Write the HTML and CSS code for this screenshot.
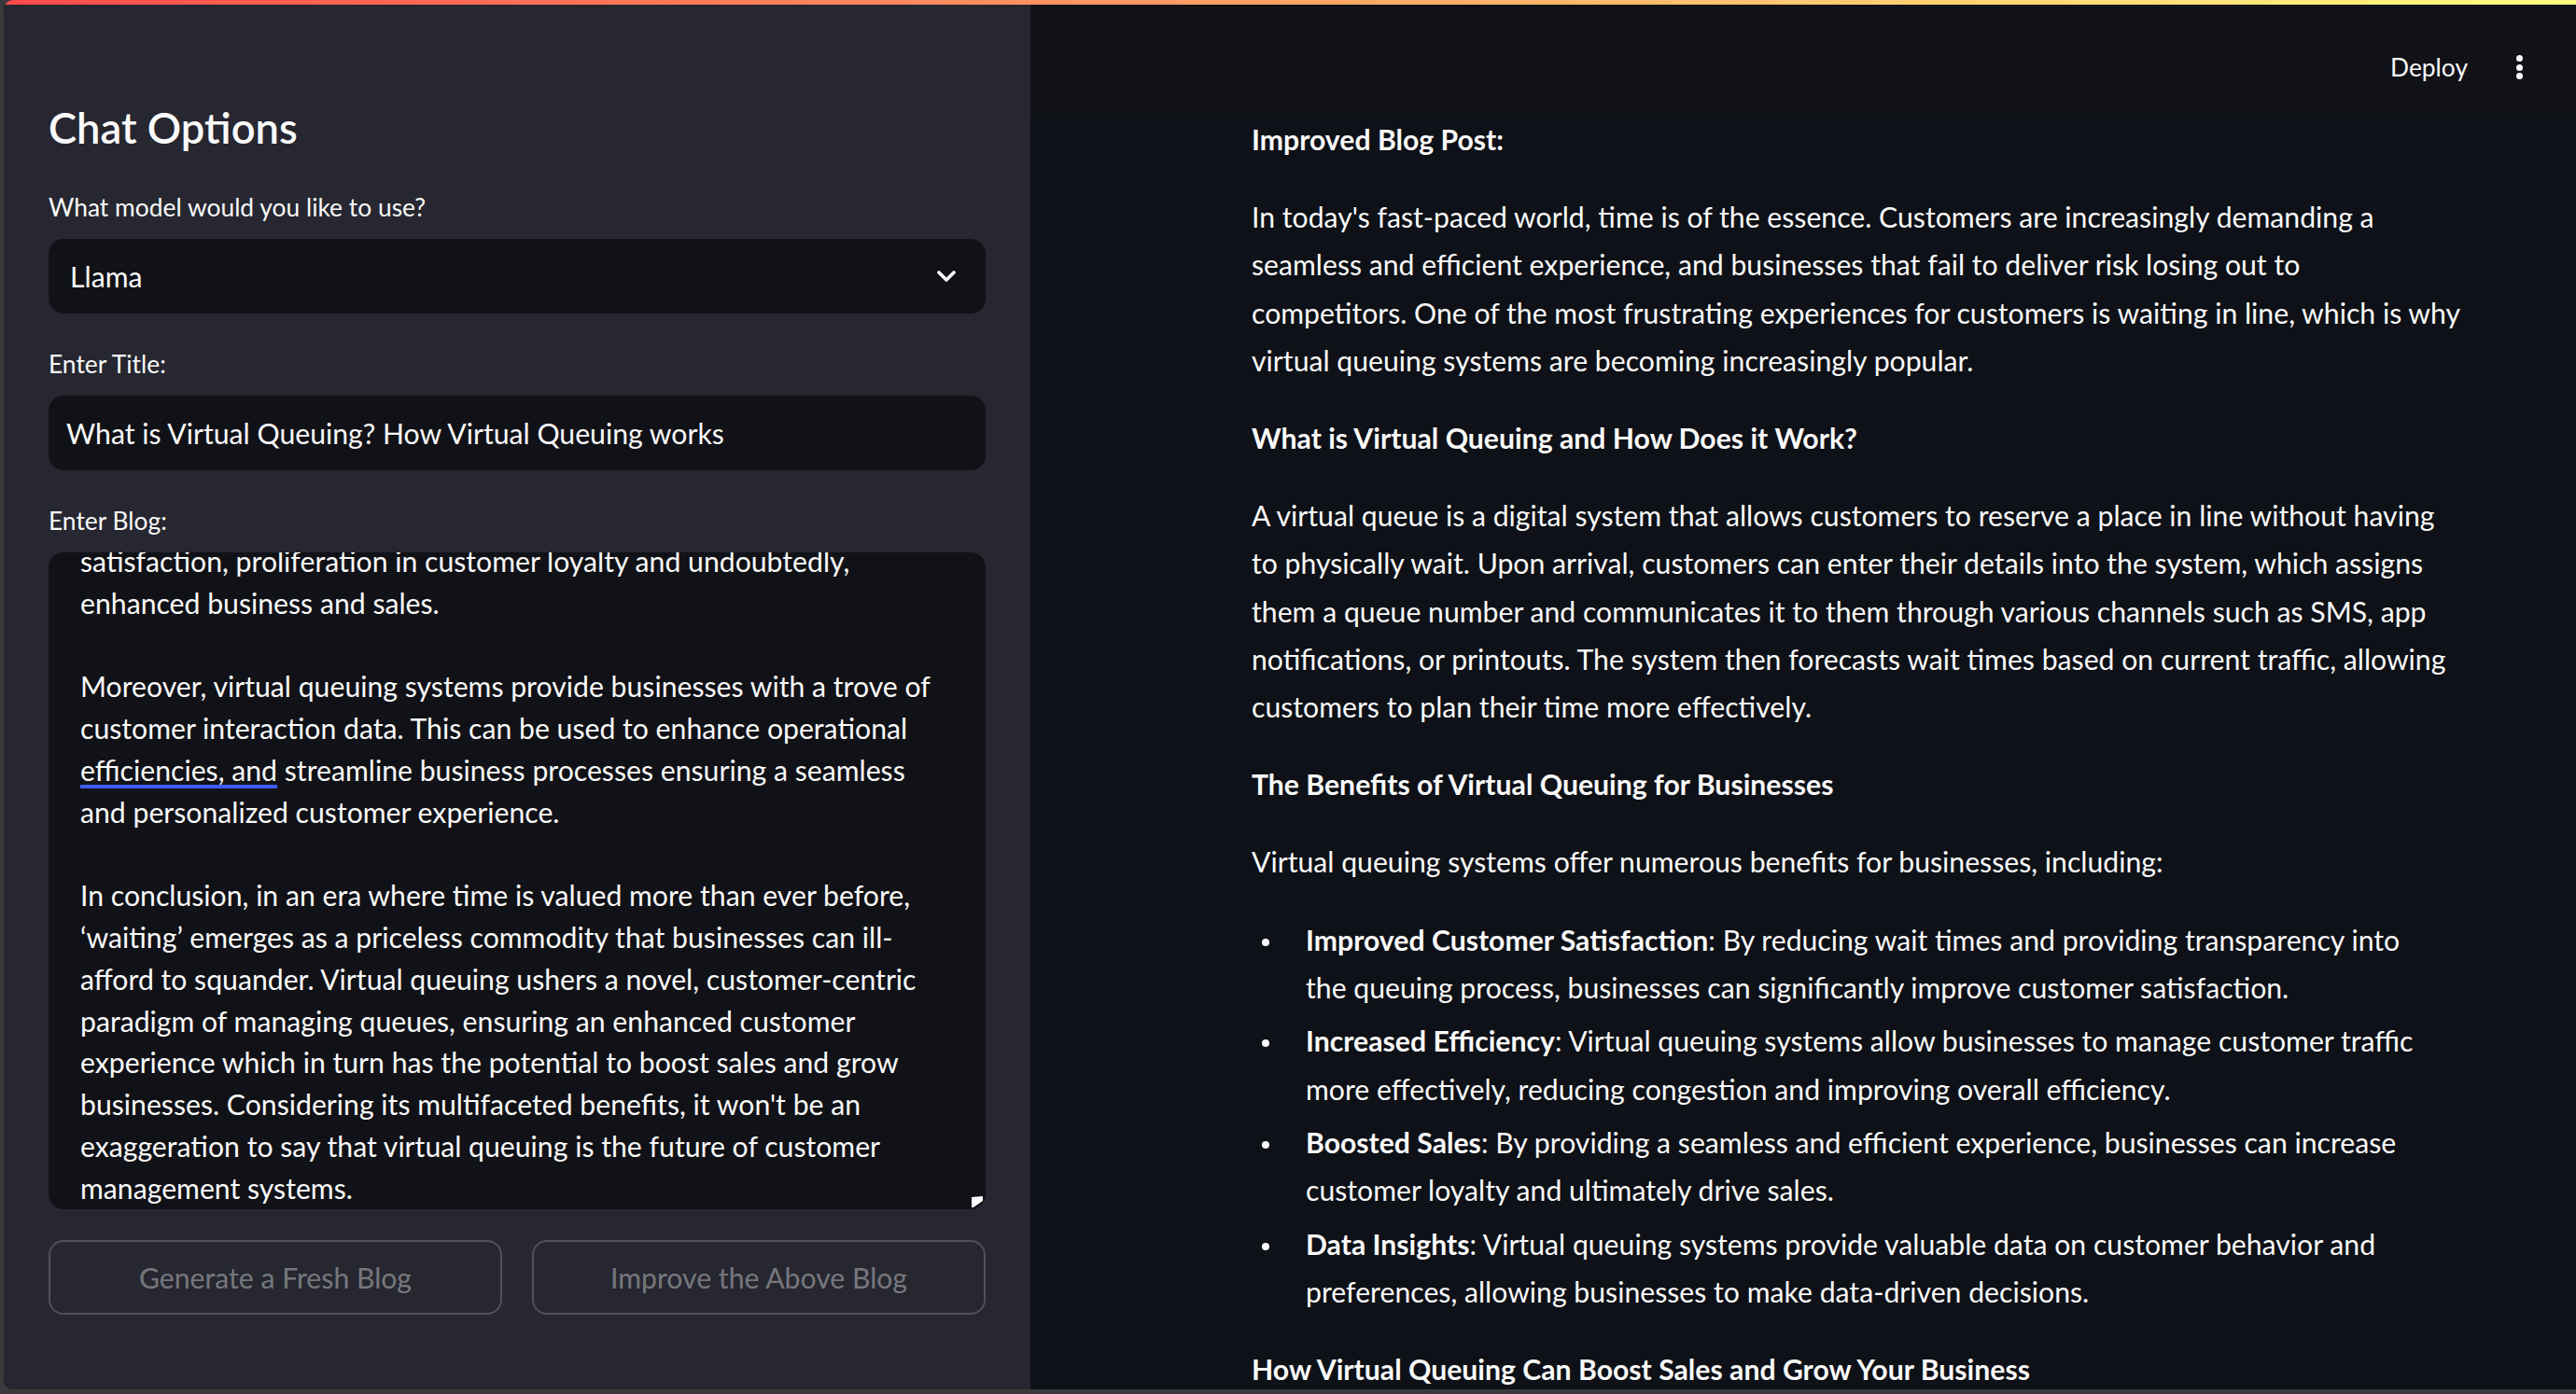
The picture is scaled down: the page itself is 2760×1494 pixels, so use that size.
FILE: index.html
```html
<!DOCTYPE html>
<html lang="en">
<head>
<meta charset="utf-8">
<title>Blog Assistant</title>
<link rel="stylesheet" href="styles.css">
</head>
<body>
<div class="window">
  <div class="decoration"></div>
  <aside class="sidebar">
    <h2 class="sb-title">Chat Options</h2>
    <div class="field">
      <div class="label">What model would you like to use?</div>
      <div class="select">
        <span>Llama</span>
        <svg class="chev" width="22" height="14" viewBox="0 0 22 14"><path d="M3 3 L11 11 L19 3" fill="none" stroke="#fafafa" stroke-width="3.6" stroke-linecap="round" stroke-linejoin="round"/></svg>
      </div>
    </div>
    <div class="field">
      <div class="label">Enter Title:</div>
      <div class="input">What is Virtual Queuing? How Virtual Queuing works</div>
    </div>
    <div class="field">
      <div class="label">Enter Blog:</div>
      <div class="textarea">
        <div class="ta-text">satisfaction, proliferation in customer loyalty and undoubtedly,<br>enhanced business and sales.<br><br>Moreover, virtual queuing systems provide businesses with a trove of<br>customer interaction data. This can be used to enhance operational<br><span class="spell">efficiencies, and</span> streamline business processes ensuring a seamless<br>and personalized customer experience.<br><br>In conclusion, in an era where time is valued more than ever before,<br>‘waiting’ emerges as a priceless commodity that businesses can ill-<br>afford to squander. Virtual queuing ushers a novel, customer-centric<br>paradigm of managing queues, ensuring an enhanced customer<br>experience which in turn has the potential to boost sales and grow<br>businesses. Considering its multifaceted benefits, it won't be an<br>exaggeration to say that virtual queuing is the future of customer<br>management systems.</div>
        <svg class="grip" width="13" height="12" viewBox="0 0 13 12"><polygon points="0,1 12,0 12,5 2,12 0,12" fill="#fafafa"/></svg>
      </div>
    </div>
    <div class="buttons">
      <button class="btn" disabled>Generate a Fresh Blog</button>
      <button class="btn" disabled>Improve the Above Blog</button>
    </div>
  </aside>
  <main class="main">
    <header class="header">
      <span class="deploy">Deploy</span>
      <span class="kebab"><i></i><i></i><i></i></span>
    </header>
    <article class="content">
      <p><strong>Improved Blog Post:</strong></p>
      <p>In today's fast-paced world, time is of the essence. Customers are increasingly demanding a<br>seamless and efficient experience, and businesses that fail to deliver risk losing out to<br>competitors. One of the most frustrating experiences for customers is waiting in line, which is why<br>virtual queuing systems are becoming increasingly popular.</p>
      <p><strong>What is Virtual Queuing and How Does it Work?</strong></p>
      <p>A virtual queue is a digital system that allows customers to reserve a place in line without having<br>to physically wait. Upon arrival, customers can enter their details into the system, which assigns<br>them a queue number and communicates it to them through various channels such as SMS, app<br>notifications, or printouts. The system then forecasts wait times based on current traffic, allowing<br>customers to plan their time more effectively.</p>
      <p><strong>The Benefits of Virtual Queuing for Businesses</strong></p>
      <p>Virtual queuing systems offer numerous benefits for businesses, including:</p>
      <ul>
        <li><strong>Improved Customer Satisfaction</strong>: By reducing wait times and providing transparency into<br>the queuing process, businesses can significantly improve customer satisfaction.</li>
        <li><strong>Increased Efficiency</strong>: Virtual queuing systems allow businesses to manage customer traffic<br>more effectively, reducing congestion and improving overall efficiency.</li>
        <li><strong>Boosted Sales</strong>: By providing a seamless and efficient experience, businesses can increase<br>customer loyalty and ultimately drive sales.</li>
        <li><strong>Data Insights</strong>: Virtual queuing systems provide valuable data on customer behavior and<br>preferences, allowing businesses to make data-driven decisions.</li>
      </ul>
      <p><strong>How Virtual Queuing Can Boost Sales and Grow Your Business</strong></p>
    </article>
  </main>
</div>
</body>
</html>
```
FILE: styles.css
```css
html, body {
  margin: 0;
  height: 100%;
}
body {
  background: #3a3a3c;
  font-family: Lato, "Noto Sans", sans-serif;
  color: #fafafa;
  overflow: hidden;
}
.window {
  position: relative;
  display: flex;
  height: 1489px;
  margin-left: 4px;
  border-radius: 10px 0 0 10px;
  overflow: hidden;
  background: #0e1117;
}
.decoration {
  position: absolute;
  top: 0;
  left: 0;
  right: 0;
  height: 5px;
  background: linear-gradient(90deg, #ff4b4b, #fffd80);
  z-index: 5;
}
.sidebar {
  flex: 0 0 1100px;
  box-sizing: border-box;
  background: #262730;
  padding: 108px 48px 0;
}
.sb-title {
  margin: 0;
  font-size: 45.3px;
  line-height: 57.6px;
  font-weight: 600;
}
.field {
  margin-top: 37px;
}
.sb-title + .field {
  margin-top: 39px;
}
.label {
  font-size: 26.4px;
  line-height: 34px;
  margin-bottom: 17px;
}
.select, .input {
  height: 80px;
  box-sizing: border-box;
  background: #111217;
  border-radius: 16px;
  display: flex;
  align-items: center;
  font-size: 30.2px;
}
.select {
  justify-content: space-between;
  padding: 0 31px 0 23px;
}
.chev {
  display: block;
}
.input {
  padding-left: 19px;
}
.textarea {
  position: relative;
  height: 704px;
  box-sizing: border-box;
  background: #111217;
  border-radius: 16px;
  overflow: hidden;
  display: flex;
  flex-direction: column;
  justify-content: flex-end;
  padding-left: 34px;
}
.ta-text {
  font-size: 30.2px;
  line-height: 44.8px;
  white-space: nowrap;
}
.spell {
  text-decoration: underline;
  text-decoration-color: #3f5cf0;
  text-decoration-thickness: 4px;
  text-underline-offset: 4px;
}
.grip {
  position: absolute;
  right: 2px;
  bottom: 2px;
}
.buttons {
  margin-top: 33px;
  display: grid;
  grid-template-columns: 1fr 1fr;
  gap: 32px;
}
.btn {
  height: 80px;
  background: transparent;
  border: 2px solid rgba(250, 250, 250, 0.2);
  border-radius: 16px;
  color: rgba(250, 250, 250, 0.4);
  font-family: Lato, "Noto Sans", sans-serif;
  font-size: 30.2px;
  padding: 0;
}
.main {
  flex: 1;
  display: flex;
  flex-direction: column;
  background: #0e1117;
  min-width: 0;
}
.header {
  flex: 0 0 122px;
  box-sizing: border-box;
  background: #111217;
  display: flex;
  justify-content: flex-end;
  align-items: flex-start;
  gap: 52px;
  padding: 55px 57px 0 0;
}
.deploy {
  font-size: 26.4px;
  line-height: 34px;
}
.kebab {
  margin-top: 4px;
  display: flex;
  flex-direction: column;
  gap: 2.5px;
}
.kebab i {
  display: block;
  width: 7px;
  height: 7px;
  border-radius: 50%;
  background: #fafafa;
}
.content {
  padding: 2px 0 0 237px;
  font-size: 30.2px;
  line-height: 51.2px;
  white-space: nowrap;
}
.content p {
  margin: 0 0 32px;
}
.content strong {
  font-weight: 700;
}
.content ul {
  margin: 0 0 32px;
  padding: 0;
  list-style: none;
}
.content li {
  position: relative;
  margin: 6.4px 0;
  padding-left: 58px;
}
.content li::before {
  content: "";
  position: absolute;
  left: 11px;
  top: 24px;
  width: 8px;
  height: 8px;
  border-radius: 50%;
  background: #fafafa;
}
```
